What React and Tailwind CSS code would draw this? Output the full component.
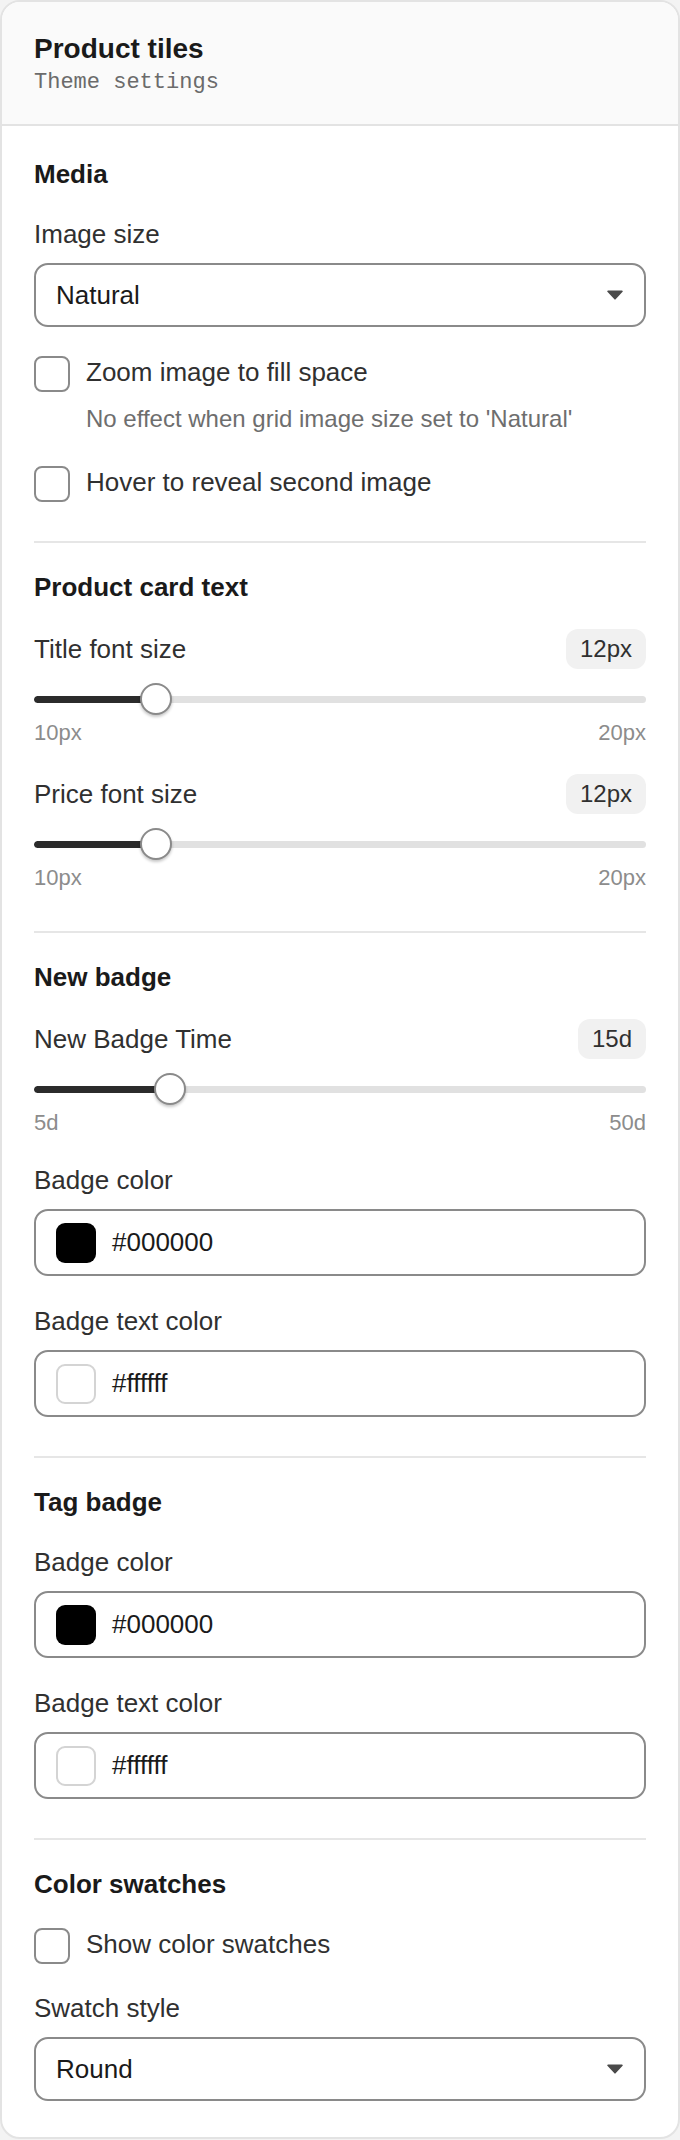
import React from "react";

const SANS = { fontFamily: '"Liberation Sans", Arial, sans-serif' };

function Heading({ children }) {
  return <h2 className="text-[26px] leading-8 font-bold text-[#1a1a1a]">{children}</h2>;
}

function Label({ children, className = "" }) {
  return <div className={"text-[26px] leading-8 text-[#303030] " + className}>{children}</div>;
}

function Caret() {
  return (
    <svg width="16" height="10" viewBox="0 0 16 10" className="shrink-0">
      <path d="M1 0.5 H15 a0.8 0.8 0 0 1 0.6 1.3 L8.6 9.3 a0.8 0.8 0 0 1 -1.2 0 L0.4 1.8 A0.8 0.8 0 0 1 1 0.5 Z" fill="#4a4a4a" />
    </svg>
  );
}

function Select({ value }) {
  return (
    <div className="mt-[13px] h-16 border-2 border-[#8a8a8a] rounded-[14px] bg-white flex items-center justify-between pl-5 pr-[21px]">
      <span className="text-[26px] text-[#1a1a1a]">{value}</span>
      <Caret />
    </div>
  );
}

function Checkbox() {
  return <div className="w-9 h-9 shrink-0 rounded-[8px] border-2 border-[#8a8a8a] bg-white" />;
}

function CheckRow({ label, helper, className = "" }) {
  return (
    <div className={"flex items-start gap-4 " + className}>
      <Checkbox />
      <div className="flex flex-col">
        <Label>{label}</Label>
        {helper && (
          <div className="mt-[13px] text-[24px] leading-9 text-[#6e6e6e]">{helper}</div>
        )}
      </div>
    </div>
  );
}

function Slider({ label, value, min, max, unit, className = "" }) {
  const pct = ((value - min) / (max - min)) * 100;
  return (
    <div className={"flex flex-col " + className}>
      <div className="flex items-center justify-between h-10">
        <Label>{label}</Label>
        <div className="h-10 px-[14px] rounded-[12px] bg-[#f1f1f1] flex items-center text-[24px] text-[#303030]">
          {value}
          {unit}
        </div>
      </div>
      <div className="relative mt-[14px] h-8 flex items-center">
        <div className="w-full h-[7px] rounded-full bg-[#e1e1e1] overflow-hidden">
          <div className="h-full rounded-full bg-[#2b2b2b]" style={{ width: pct + "%" }} />
        </div>
        <div
          className="absolute top-0 w-8 h-8 rounded-full bg-white border-2 border-[#8a8a8a] shadow-[0_2px_3px_rgba(0,0,0,0.22)]"
          style={{ left: `calc(${pct}% - 16px)` }}
        />
      </div>
      <div className="mt-1 flex justify-between text-[22px] leading-7 text-[#8c8c8c]">
        <span>
          {min}
          {unit}
        </span>
        <span>
          {max}
          {unit}
        </span>
      </div>
    </div>
  );
}

function ColorField({ label, color, className = "" }) {
  const white = color.toLowerCase() === "#ffffff";
  return (
    <div className={"flex flex-col " + className}>
      <Label>{label}</Label>
      <div className="mt-[13px] h-[67px] border-2 border-[#8a8a8a] rounded-[14px] bg-white flex items-center gap-4 px-5">
        <div
          className={
            "w-10 h-10 rounded-[9px] shrink-0 " +
            (white ? "bg-white border-2 border-[#d4d4d4]" : "bg-black")
          }
        />
        <span className="text-[26px] text-[#1a1a1a]">{color}</span>
      </div>
    </div>
  );
}

export default function App() {
  return (
    <div className="bg-[#f3f3f3] min-h-screen" style={SANS}>
      <div className="rounded-[20px] border-2 border-[#e3e3e3] bg-white overflow-hidden">
        <header className="bg-[#fafafa] border-b-2 border-[#e3e3e3] px-8 pt-[31px] pb-[27px]">
          <h1 className="text-[28px] leading-8 font-bold text-[#1a1a1a]">Product tiles</h1>
          <p
            className="mt-1 text-[22px] leading-7 text-[#6b6b6b]"
            style={{ fontFamily: '"Liberation Mono", "Courier New", monospace' }}
          >
            Theme settings
          </p>
        </header>

        <div className="px-8">
          {/* Media */}
          <section className="pt-8 pb-[39px] border-b-2 border-[#e6e6e6] flex flex-col">
            <Heading>Media</Heading>
            <Label className="mt-7">Image size</Label>
            <Select value="Natural" />
            <CheckRow
              className="mt-[29px]"
              label="Zoom image to fill space"
              helper="No effect when grid image size set to 'Natural'"
            />
            <CheckRow className="mt-[29px]" label="Hover to reveal second image" />
          </section>

          {/* Product card text */}
          <section className="pt-7 pb-[39px] border-b-2 border-[#e6e6e6] flex flex-col">
            <Heading>Product card text</Heading>
            <Slider className="mt-[26px]" label="Title font size" value={12} min={10} max={20} unit="px" />
            <Slider className="mt-[27px]" label="Price font size" value={12} min={10} max={20} unit="px" />
          </section>

          {/* New badge */}
          <section className="pt-7 pb-[39px] border-b-2 border-[#e6e6e6] flex flex-col">
            <Heading>New badge</Heading>
            <Slider className="mt-[26px]" label="New Badge Time" value={15} min={5} max={50} unit="d" />
            <ColorField className="mt-[27px]" label="Badge color" color="#000000" />
            <ColorField className="mt-[29px]" label="Badge text color" color="#ffffff" />
          </section>

          {/* Tag badge */}
          <section className="pt-7 pb-[39px] border-b-2 border-[#e6e6e6] flex flex-col">
            <Heading>Tag badge</Heading>
            <ColorField className="mt-7" label="Badge color" color="#000000" />
            <ColorField className="mt-[29px]" label="Badge text color" color="#ffffff" />
          </section>

          {/* Color swatches */}
          <section className="pt-7 pb-9 flex flex-col">
            <Heading>Color swatches</Heading>
            <CheckRow className="mt-7" label="Show color swatches" />
            <Label className="mt-7">Swatch style</Label>
            <Select value="Round" />
          </section>
        </div>
      </div>
    </div>
  );
}
